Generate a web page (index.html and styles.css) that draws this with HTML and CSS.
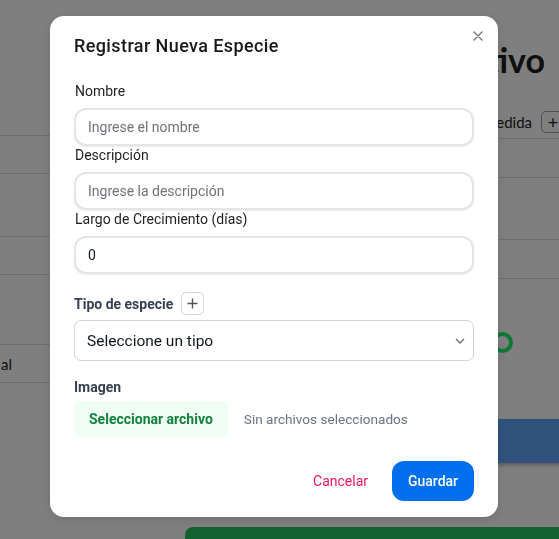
FILE: index.html
```html
<!DOCTYPE html>
<html lang="es">
<head>
<meta charset="utf-8">
<title>Registrar Nueva Especie</title>
<link rel="stylesheet" href="styles.css">
</head>
<body>
<div class="page">
  <div class="col-left">
    <div class="row r1"></div>
    <div class="row r2"></div>
    <div class="row r3"><span>al</span></div>
  </div>
  <div class="col-right">
    <h1 class="page-title">Registrar Cultivo</h1>
    <div class="field-head"><span>Unidad de medida</span><span class="mini-btn">+</span></div>
    <div class="box b1"></div>
    <div class="box b2"></div>
    <div class="ring"></div>
    <div class="bar-blue"></div>
    <div class="bar-green"></div>
  </div>
</div>
<div class="overlay"></div>
<div class="modal" role="dialog">
  <button class="close" aria-label="Cerrar">
    <svg width="10" height="10" viewBox="0 0 10 10"><path d="M1 1L9 9M9 1L1 9" stroke="#71717a" stroke-width="1.3" stroke-linecap="round"/></svg>
  </button>
  <h2 class="modal-title">Registrar Nueva Especie</h2>
  <div class="modal-body">
    <label class="lbl">Nombre</label>
    <input class="inp" type="text" placeholder="Ingrese el nombre">
    <label class="lbl">Descripción</label>
    <input class="inp" type="text" placeholder="Ingrese la descripción">
    <label class="lbl">Largo de Crecimiento (días)</label>
    <input class="inp" type="text" value="0">
    <div class="type-row">
      <span class="lbl-strong">Tipo de especie</span>
      <button class="add" aria-label="Agregar tipo">
        <svg width="11" height="11" viewBox="0 0 11 11"><path d="M5.5 0.5V10.5M0.5 5.5H10.5" stroke="#52525b" stroke-width="1.4"/></svg>
      </button>
    </div>
    <div class="select-wrap">
      <select class="sel"><option>Seleccione un tipo</option></select>
      <svg class="chev" width="10" height="6" viewBox="0 0 10 6"><path d="M1 1L5 5L9 1" fill="none" stroke="#6b6b6b" stroke-width="1.3"/></svg>
    </div>
    <div class="lbl-strong img-lbl">Imagen</div>
    <div class="file-row">
      <span class="file-btn">Seleccionar archivo</span>
      <span class="file-none">Sin archivos seleccionados</span>
    </div>
  </div>
  <div class="modal-footer">
    <button class="btn-cancel">Cancelar</button>
    <button class="btn-save">Guardar</button>
  </div>
</div>
</body>
</html>
```
FILE: styles.css
```css
* { box-sizing: border-box; }
html, body { margin: 0; padding: 0; }
body {
  width: 559px;
  height: 539px;
  overflow: hidden;
  background: #ffffff;
  font-family: Lato, "Liberation Sans", sans-serif;
  position: relative;
}

/* background page */
.page {
  display: flex;
  align-items: flex-start;
  gap: 15px;
  height: 539px;
}
.col-left {
  width: 170px;
  flex: none;
  display: flex;
  flex-direction: column;
}
.row {
  flex: none;
  height: 39px;
  border-top: 1px solid #dcdcdc;
  border-bottom: 1px solid #dcdcdc;
  display: flex;
  align-items: center;
  padding-left: 1px;
  font-size: 15px;
  color: #222;
}
.r1 { margin-top: 135px; }
.r2 { margin-top: 62px; }
.r3 { margin-top: 69px; }

.col-right {
  width: 420px;
  flex: none;
  display: flex;
  flex-direction: column;
}
.col-right > * { flex: none; }
.page-title {
  margin: 39px 0 0;
  padding-right: 60px;
  text-align: right;
  font-size: 34px;
  line-height: 42px;
  font-weight: 700;
  color: #202020;
  white-space: nowrap;
}
.field-head {
  margin-top: 30px;
  height: 22px;
  display: flex;
  justify-content: flex-end;
  align-items: center;
  gap: 9px;
  padding-right: 40px;
  font-size: 15px;
  color: #222;
}
.mini-btn {
  width: 24px;
  height: 22px;
  border: 1px solid #a0a0a0;
  border-radius: 5px;
  display: flex;
  align-items: center;
  justify-content: center;
  font-size: 18px;
}
.box {
  height: 40px;
  border-top: 1px solid #dcdcdc;
  border-bottom: 1px solid #dcdcdc;
}
.b1 { margin-top: 5px; }
.b2 { margin-top: 61px; }
.ring {
  margin-top: 53px;
  margin-left: 307px;
  width: 21px;
  height: 21px;
  border: 4px solid #22ee6e;
  border-radius: 50%;
}
.bar-blue {
  margin-top: 66px;
  height: 44px;
  background: #60a5fa;
  box-shadow: 0 2px 4px rgba(0, 0, 0, 0.3);
}
.bar-green {
  margin-top: 64px;
  height: 12px;
  background: #22c55e;
  border-radius: 8px 8px 0 0;
}

.overlay {
  position: fixed;
  inset: 0;
  background: rgba(0, 0, 0, 0.5);
}

/* modal */
.modal {
  position: absolute;
  left: 50px;
  top: 16px;
  width: 448px;
  background: #ffffff;
  border-radius: 14px;
  padding: 16px 24px 16px;
  box-shadow: 0 2px 10px rgba(0, 0, 0, 0.12);
  font-family: Roboto, "Liberation Sans", sans-serif;
  color: #11181c;
}
.close {
  position: absolute;
  top: 10px;
  right: 10px;
  width: 20px;
  height: 20px;
  padding: 0;
  border: none;
  background: transparent;
  display: flex;
  align-items: center;
  justify-content: center;
}
.modal-title {
  margin: 0;
  font-size: 18px;
  line-height: 28px;
  font-weight: 500;
  letter-spacing: 0.4px;
  color: #18181b;
}
.modal-body {
  margin-top: 22px;
  display: flex;
  flex-direction: column;
}
.lbl {
  display: block;
  font-size: 14px;
  line-height: 19px;
  padding-left: 1px;
  margin-bottom: 7px;
  color: #1f1f23;
}
.inp {
  height: 38px;
  width: 100%;
  border: 2px solid #e4e4e7;
  border-radius: 12px;
  padding: 0 12px;
  font-family: inherit;
  font-size: 14px;
  color: #11181c;
  background: #fff;
  box-shadow: 0 1px 2px rgba(0, 0, 0, 0.07);
  outline: none;
}
.inp::placeholder { color: #71717a; }

.type-row {
  margin-top: 18px;
  height: 23px;
  display: flex;
  align-items: center;
  gap: 8px;
}
.lbl-strong {
  font-size: 14px;
  line-height: 20px;
  font-weight: 700;
  color: #374151;
}
.add {
  width: 23px;
  height: 23px;
  padding: 0;
  border: 1px solid #d4d4d8;
  border-radius: 5px;
  background: #fff;
  display: flex;
  align-items: center;
  justify-content: center;
}
.select-wrap {
  margin-top: 5px;
  position: relative;
}
.sel {
  appearance: none;
  -webkit-appearance: none;
  width: 100%;
  height: 41px;
  border: 1px solid #d4d4d8;
  border-radius: 7px;
  padding: 0 30px 0 12px;
  font-family: inherit;
  font-size: 15.5px;
  color: #11181c;
  background: #fff;
}
.chev {
  position: absolute;
  right: 9px;
  top: 18px;
  pointer-events: none;
}
.img-lbl { margin-top: 16px; }
.file-row {
  margin-top: 4px;
  display: flex;
  align-items: center;
  gap: 16px;
}
.file-btn {
  height: 36px;
  padding: 0 15px;
  display: flex;
  align-items: center;
  background: #f0fdf4;
  color: #15803d;
  font-size: 14px;
  font-weight: 700;
  border-radius: 6px;
}
.file-none {
  font-size: 13.6px;
  color: #6b7280;
}
.modal-footer {
  margin-top: 24px;
  display: flex;
  justify-content: flex-end;
  gap: 8px;
}
.btn-cancel, .btn-save {
  height: 40px;
  border: none;
  font-family: inherit;
  font-size: 14px;
  border-radius: 12px;
  display: flex;
  align-items: center;
  justify-content: center;
}
.btn-cancel {
  padding: 0 16px;
  background: transparent;
  color: #f31260;
}
.btn-save {
  width: 82px;
  background: #006fee;
  color: #ffffff;
  font-weight: 500;
}
```
